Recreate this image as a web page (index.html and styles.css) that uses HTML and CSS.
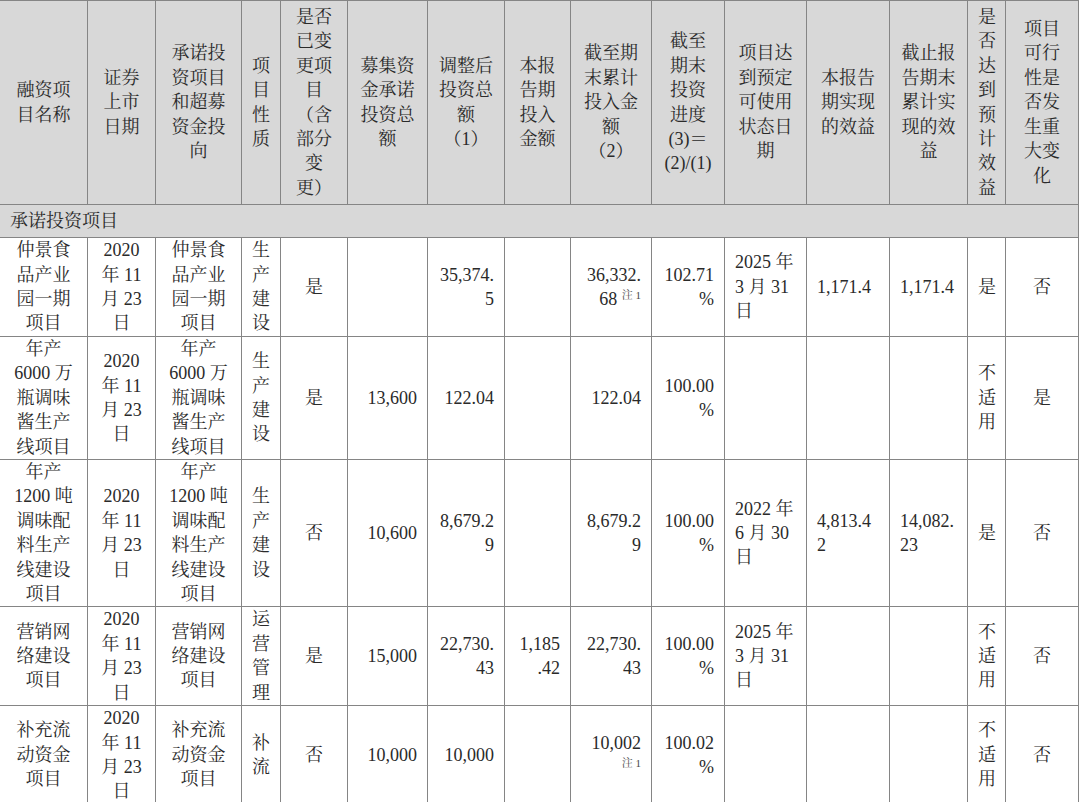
FILE: index.html
```html
<!DOCTYPE html>
<html lang="zh-CN">
<head>
<meta charset="utf-8">
<title>募集资金使用情况</title>
<link rel="stylesheet" href="styles.css">
</head>
<body>
<table class="fund-table">
  <colgroup>
    <col class="c1"><col class="c2"><col class="c3"><col class="c4"><col class="c5">
    <col class="c6"><col class="c7"><col class="c8"><col class="c9"><col class="c10">
    <col class="c11"><col class="c12"><col class="c13"><col class="c14"><col class="c15">
  </colgroup>
  <thead>
    <tr class="row-head">
      <th class="first">融资项<br>目名称</th>
      <th>证券<br>上市<br>日期</th>
      <th>承诺投<br>资项目<br>和超募<br>资金投<br>向</th>
      <th>项<br>目<br>性<br>质</th>
      <th>是否<br>已变<br>更项<br>目<br>（含<br>部分<br>变<br>更）</th>
      <th>募集资<br>金承诺<br>投资总<br>额</th>
      <th>调整后<br>投资总<br>额<br>（1）</th>
      <th>本报<br>告期<br>投入<br>金额</th>
      <th>截至期<br>末累计<br>投入金<br>额<br>（2）</th>
      <th>截至<br>期末<br>投资<br>进度<br>(3)＝<br>(2)/(1)</th>
      <th>项目达<br>到预定<br>可使用<br>状态日<br>期</th>
      <th>本报告<br>期实现<br>的效益</th>
      <th>截止报<br>告期末<br>累计实<br>现的效<br>益</th>
      <th>是<br>否<br>达<br>到<br>预<br>计<br>效<br>益</th>
      <th>项目<br>可行<br>性是<br>否发<br>生重<br>大变<br>化</th>
    </tr>
  </thead>
  <tbody>
    <tr class="row-section">
      <td class="first section" colspan="15">承诺投资项目</td>
    </tr>
    <tr class="row-1">
      <td class="first ctr">仲景食<br>品产业<br>园一期<br>项目</td>
      <td class="ctr">2020<br>年 11<br>月 23<br>日</td>
      <td class="ctr">仲景食<br>品产业<br>园一期<br>项目</td>
      <td class="ctr">生<br>产<br>建<br>设</td>
      <td class="ctr">是</td>
      <td class="num"></td>
      <td class="num">35,374.<br>5</td>
      <td class="num"></td>
      <td class="num">36,332.<br>68 <sup class="note">注 1</sup></td>
      <td class="num">102.71<br>%</td>
      <td class="lft">2025 年<br>3 月 31<br>日</td>
      <td class="lft">1,171.4</td>
      <td class="lft">1,171.4</td>
      <td class="ctr">是</td>
      <td class="ctr">否</td>
    </tr>
    <tr class="row-2">
      <td class="first ctr">年产<br>6000 万<br>瓶调味<br>酱生产<br>线项目</td>
      <td class="ctr">2020<br>年 11<br>月 23<br>日</td>
      <td class="ctr">年产<br>6000 万<br>瓶调味<br>酱生产<br>线项目</td>
      <td class="ctr">生<br>产<br>建<br>设</td>
      <td class="ctr">是</td>
      <td class="num">13,600</td>
      <td class="num">122.04</td>
      <td class="num"></td>
      <td class="num">122.04</td>
      <td class="num">100.00<br>%</td>
      <td class="lft"></td>
      <td class="lft"></td>
      <td class="lft"></td>
      <td class="ctr">不<br>适<br>用</td>
      <td class="ctr">是</td>
    </tr>
    <tr class="row-3">
      <td class="first ctr">年产<br>1200 吨<br>调味配<br>料生产<br>线建设<br>项目</td>
      <td class="ctr">2020<br>年 11<br>月 23<br>日</td>
      <td class="ctr">年产<br>1200 吨<br>调味配<br>料生产<br>线建设<br>项目</td>
      <td class="ctr">生<br>产<br>建<br>设</td>
      <td class="ctr">否</td>
      <td class="num">10,600</td>
      <td class="num">8,679.2<br>9</td>
      <td class="num"></td>
      <td class="num">8,679.2<br>9</td>
      <td class="num">100.00<br>%</td>
      <td class="lft">2022 年<br>6 月 30<br>日</td>
      <td class="lft">4,813.4<br>2</td>
      <td class="lft">14,082.<br>23</td>
      <td class="ctr">是</td>
      <td class="ctr">否</td>
    </tr>
    <tr class="row-4">
      <td class="first ctr">营销网<br>络建设<br>项目</td>
      <td class="ctr">2020<br>年 11<br>月 23<br>日</td>
      <td class="ctr">营销网<br>络建设<br>项目</td>
      <td class="ctr">运<br>营<br>管<br>理</td>
      <td class="ctr">是</td>
      <td class="num">15,000</td>
      <td class="num">22,730.<br>43</td>
      <td class="num">1,185<br>.42</td>
      <td class="num">22,730.<br>43</td>
      <td class="num">100.00<br>%</td>
      <td class="lft">2025 年<br>3 月 31<br>日</td>
      <td class="lft"></td>
      <td class="lft"></td>
      <td class="ctr">不<br>适<br>用</td>
      <td class="ctr">否</td>
    </tr>
    <tr class="row-5">
      <td class="first ctr">补充流<br>动资金<br>项目</td>
      <td class="ctr">2020<br>年 11<br>月 23<br>日</td>
      <td class="ctr">补充流<br>动资金<br>项目</td>
      <td class="ctr">补<br>流</td>
      <td class="ctr">否</td>
      <td class="num">10,000</td>
      <td class="num">10,000</td>
      <td class="num"></td>
      <td class="num">10,002<br><sup class="note">注 1</sup></td>
      <td class="num">100.02<br>%</td>
      <td class="lft"></td>
      <td class="lft"></td>
      <td class="lft"></td>
      <td class="ctr">不<br>适<br>用</td>
      <td class="ctr">否</td>
    </tr>
  </tbody>
</table>
</body>
</html>
```

FILE: styles.css
```css
html, body {
  margin: 0;
  padding: 0;
  background: #ffffff;
}

body {
  font-family: "Liberation Serif", "Noto Serif CJK SC", "Noto Sans CJK SC", serif;
  font-size: 18px;
  color: #2a2a2a;
}

.fund-table {
  table-layout: fixed;
  border-collapse: collapse;
  width: 1080px;
  margin-left: -1px;
}

.c1 { width: 88px; }
.c2 { width: 68px; }
.c3 { width: 86px; }
.c4 { width: 39px; }
.c5 { width: 67px; }
.c6 { width: 80px; }
.c7 { width: 77px; }
.c8 { width: 66px; }
.c9 { width: 81px; }
.c10 { width: 73px; }
.c11 { width: 82px; }
.c12 { width: 83px; }
.c13 { width: 78px; }
.c14 { width: 38px; }
.c15 { width: 73px; }

.fund-table th,
.fund-table td {
  border: 1px solid #858585;
  padding: 0 10px;
  line-height: 24.4px;
  white-space: nowrap;
  overflow: visible;
  vertical-align: middle;
  font-weight: normal;
}

.fund-table th {
  background: #d8d8d8;
  text-align: center;
}

.row-head { height: 204px; }
.row-section { height: 33px; }
.row-1 { height: 99px; }
.row-2 { height: 122px; }
.row-3 { height: 147px; }
.row-4 { height: 98px; }
.row-5 { height: 97px; }

.section {
  background: #d8d8d8;
  text-align: left;
  padding-left: 14px;
  border-bottom: 2px solid #a3a3a3;
}

.ctr { text-align: center; }
.num { text-align: right; }
.lft { text-align: left; }

.note {
  font-size: 11px;
  line-height: 0;
  vertical-align: 6px;
  color: #4a4a4a;
}
```
